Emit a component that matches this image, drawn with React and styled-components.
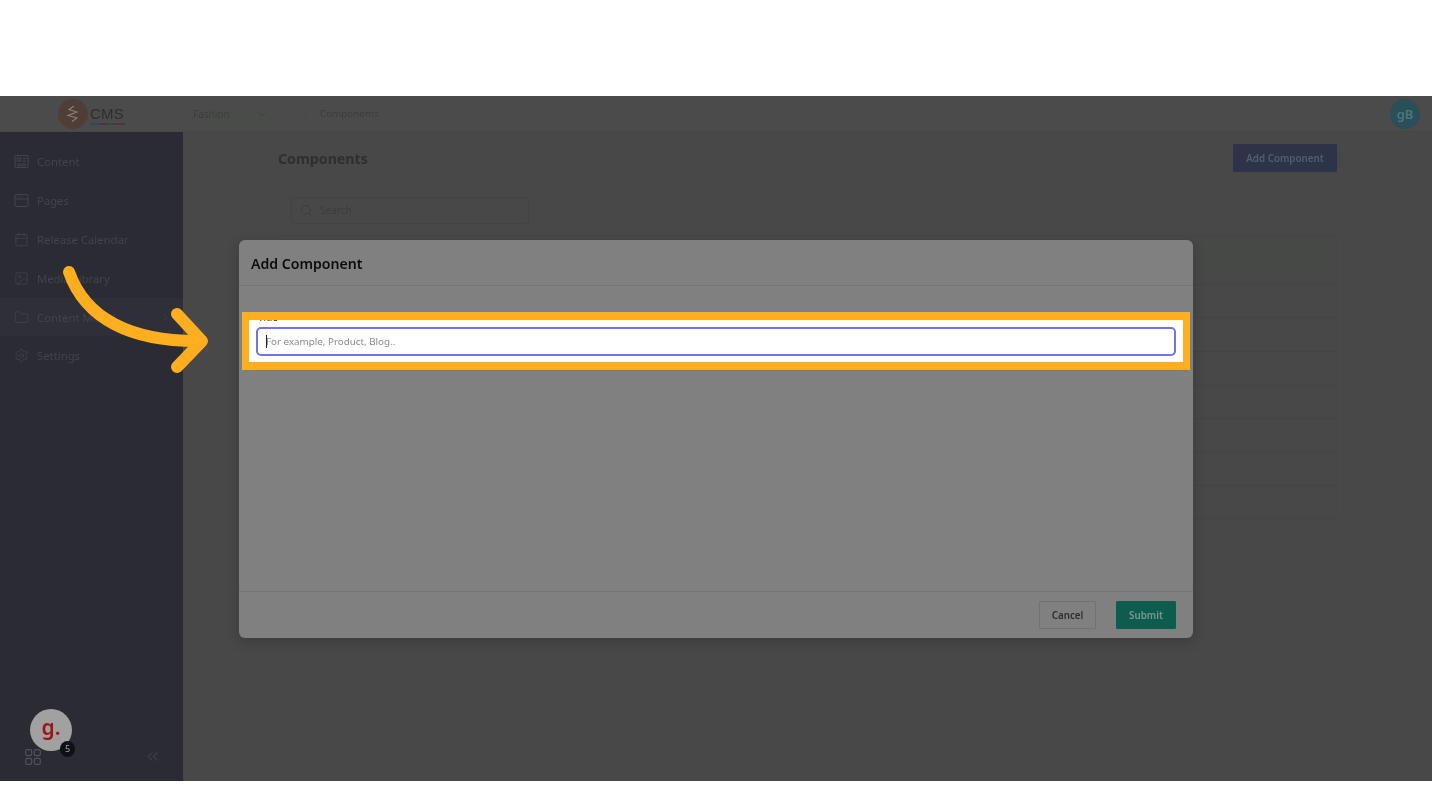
import React from 'react';
import styled, { createGlobalStyle } from 'styled-components';
import { Calendar, ChevronDown, ChevronRight, ChevronsLeft, Folder, Image, Search, Settings } from 'lucide-react';

const GlobalStyle = createGlobalStyle`
  html, body {
    margin: 0;
    background: #fff;
    font-family: "Noto Sans", "Open Sans", sans-serif;
  }
`;

const Page = styled.div`
  width: 1432px;
  height: 805px;
  padding-top: 96px;
  box-sizing: border-box;
  overflow: hidden;
  background: #fff;
`;

const Frame = styled.div`
  position: relative;
  height: 685px;
  display: grid;
  grid-template-columns: 183px 1fr;
  grid-template-rows: 36px 1fr;
  background: #484848;
  filter: blur(0.4px);
`;

const TopBar = styled.header`
  grid-column: 1 / 3;
  display: flex;
  align-items: center;
  padding-right: 12px;
  background: #4b4b4b;
  border-bottom: 1px solid #474747;
  box-sizing: border-box;
`;

const LogoBox = styled.div`
  width: 183px;
  display: flex;
  align-items: center;
  padding-left: 58px;
  box-sizing: border-box;
`;

const LogoMark = styled.div`
  width: 30px;
  height: 30px;
  border-radius: 50%;
  background: #4f3e38;
  display: flex;
  align-items: center;
  justify-content: center;
`;

const LogoWord = styled.div`
  margin-left: 2px;
  display: flex;
  flex-direction: column;
  font-family: "Liberation Sans", Arial, sans-serif;
  font-size: 15px;
  line-height: 15px;
  color: #2e2e2e;
  letter-spacing: 0.2px;
  padding-top: 3px;
`;

const LogoStripe = styled.div`
  height: 2px;
  width: 35px;
  margin-top: 2px;
  background: linear-gradient(90deg, #2d4a5a 0 30%, #4a3349 30% 50%, #34493f 50% 70%, #553530 70%);
`;

const SiteSelect = styled.div`
  width: 92px;
  height: 26px;
  padding: 0 6px 0 10px;
  box-sizing: border-box;
  display: flex;
  align-items: center;
  justify-content: space-between;
  border-radius: 3px;
  background: #4a4c4a;
  color: #3d3d3d;
  font-size: 10px;
`;

const Crumb = styled.div`
  margin-left: 26px;
  display: flex;
  align-items: center;
  gap: 9px;
  color: #3d3d3d;
  font-size: 9.8px;
`;

const UserBadge = styled.div`
  margin-left: auto;
  width: 30px;
  height: 30px;
  border-radius: 50%;
  background: #2a4f58;
  color: #4c7680;
  font-size: 13px;
  font-weight: 600;
  display: flex;
  align-items: center;
  justify-content: center;
`;

const Sidebar = styled.aside`
  display: flex;
  flex-direction: column;
  padding-top: 10.500px;
  background: #2a2b33;
`;

const NavItem = styled.div`
  height: 38.800px;
  padding: 0 11px 0 14px;
  display: flex;
  align-items: center;
  gap: 8px;
  background: ${props => (props.$active ? '#2e2f38' : 'transparent')};
  color: #42434c;
  font-size: 11.3px;
`;

const NavLabel = styled.span`
  flex: 1;
`;

const SidebarFoot = styled.div`
  margin-top: auto;
  height: 71px;
  padding: 0 22px 16px 25px;
  display: flex;
  align-items: flex-end;
  justify-content: space-between;
  color: #50515a;
`;

const HelpBubble = styled.div`
  position: absolute;
  left: 30px;
  bottom: 30px;
  width: 42px;
  height: 42px;
  border-radius: 50%;
  background: #a1a1a1;
  color: #9b1616;
  font-size: 21px;
  line-height: 36px;
  font-weight: 600;
  text-align: center;
`;

const HelpCount = styled.span`
  position: absolute;
  right: -3px;
  bottom: -6px;
  width: 15px;
  height: 16px;
  border-radius: 50%;
  background: #0d1117;
  color: #a5a5a5;
  font-size: 9px;
  line-height: 16px;
  font-weight: 400;
`;

const Main = styled.main`
  padding: 12px 95px 0;
  display: flex;
  flex-direction: column;
`;

const TitleRow = styled.div`
  display: flex;
  align-items: center;
  justify-content: space-between;
`;

const Title = styled.h1`
  margin: 0;
  color: #2f2f2f;
  font-size: 14.2px;
  font-weight: 700;
`;

const AddButton = styled.div`
  width: 104px;
  height: 28px;
  display: flex;
  align-items: center;
  justify-content: center;
  border-radius: 1px;
  background: #2d3349;
  color: #535d76;
  font-size: 9.8px;
  font-weight: 600;
`;

const SearchCard = styled.div`
  margin-top: 14px;
  height: 50px;
  padding: 10px 12px 0;
  box-sizing: border-box;
  border: 1px solid #474747;
  border-bottom-color: #454545;
`;

const SearchBox = styled.div`
  width: 238px;
  height: 27px;
  padding: 0 8px 1px;
  box-sizing: border-box;
  display: flex;
  align-items: center;
  gap: 7px;
  border: 1px solid #434343;
  border-radius: 3px;
  color: #3c3c3c;
  font-size: 10px;
`;

const Row = styled.div`
  height: ${props => props.$height}px;
  box-sizing: border-box;
  border-bottom: 1px solid #444;
  border-right: 1px solid #464646;
  background: ${props => (props.$tinted ? '#474947' : 'transparent')};
`;

const Backdrop = styled.div`
  position: absolute;
  inset: 0;
  display: flex;
  justify-content: center;
  align-items: flex-start;
  padding-top: 144px;
`;

const Modal = styled.div`
  width: 954px;
  height: 398px;
  display: flex;
  flex-direction: column;
  border-radius: 6px;
  background: #808080;
  box-shadow: 0 4px 14px rgba(0, 0, 0, 0.18);
`;

const ModalHead = styled.div`
  height: 46px;
  padding: 2px 12px 0;
  box-sizing: border-box;
  display: flex;
  align-items: center;
  border-bottom: 1px solid #757575;
  color: #0c0c0c;
  font-size: 14.1px;
  font-weight: 600;
`;

const ModalBody = styled.div`
  flex: 1;
  padding: 26px 3px 0;
`;

const Spotlight = styled.div`
  height: 58px;
  padding: 0 7px;
  box-sizing: border-box;
  border: solid #ffae1f;
  border-width: 8px 7px;
  background: #fff;
  overflow: hidden;
`;

const FieldLabel = styled.label`
  display: block;
  height: 12px;
  margin: -5px 0 0 2px;
  color: #333;
  font-size: 10px;
  line-height: 4px;
`;

const InputWrap = styled.div`
  position: relative;

  &::before {
    content: '';
    position: absolute;
    left: 10px;
    top: 8px;
    width: 1px;
    height: 13px;
    background: #222;
  }
`;

const TextInput = styled.input`
  display: block;
  width: 100%;
  height: 29px;
  padding: 0 8px;
  box-sizing: border-box;
  border: 2px solid #7272ea;
  border-radius: 5px;
  outline: none;
  background: #fff;
  font-family: inherit;
  font-size: 9.8px;

  &::placeholder {
    color: #8b8b8b;
    opacity: 1;
  }
`;

const ModalFoot = styled.div`
  height: 47px;
  padding: 9px 17px 0 0;
  box-sizing: border-box;
  display: flex;
  justify-content: flex-end;
  gap: 20px;
  border-top: 1px solid #757575;
`;

const FootButton = styled.div`
  width: ${props => (props.$primary ? 60 : 57)}px;
  height: 28px;
  box-sizing: border-box;
  display: flex;
  align-items: center;
  justify-content: center;
  border: 1px solid ${props => (props.$primary ? '#0c5f4f' : '#727272')};
  border-radius: 1px;
  background: ${props => (props.$primary ? '#0d5c4d' : 'transparent')};
  color: ${props => (props.$primary ? '#7a9891' : '#2e2e2e')};
  font-size: 9.8px;
  font-weight: 600;
`;

const Arrow = styled.svg`
  position: absolute;
  left: 0;
  top: 0;
  pointer-events: none;
`;

const ContentIcon = () => (
  <svg width="15" height="15" viewBox="0 0 15 15" fill="none" stroke="currentColor" strokeWidth="1.1">
    <rect x="1" y="1.5" width="13" height="12" rx="1.5" />
    <rect x="3.2" y="4" width="3.2" height="3" />
    <path d="M8.5 4.500h3.500M8.500 7h3.500M3 10h9M3 11.800h9" />
  </svg>
);

const PagesIcon = () => (
  <svg width="15" height="15" viewBox="0 0 15 15" fill="none" stroke="currentColor" strokeWidth="1.1">
    <rect x="1" y="1.5" width="13" height="12" rx="1.5" />
    <path d="M1 6h13M3 3.800h.8M5 3.800h.8M7 3.800h.8" />
  </svg>
);

const GridIcon = () => (
  <svg width="16" height="16" viewBox="0 0 16 16" fill="none" stroke="currentColor" strokeWidth="1.2">
    <rect x="0.7" y="0.7" width="6" height="6" rx="1.6" />
    <rect x="9.3" y="0.7" width="6" height="6" rx="1.6" />
    <rect x="0.7" y="9.3" width="6" height="6" rx="1.6" />
    <rect x="9.3" y="9.3" width="6" height="6" rx="1.6" />
  </svg>
);

const navItems = [
  { label: 'Content', icon: <ContentIcon /> },
  { label: 'Pages', icon: <PagesIcon /> },
  { label: 'Release Calendar', icon: <Calendar size={15} strokeWidth={1.3} /> },
  { label: 'Media Library', icon: <Image size={15} strokeWidth={1.3} /> },
  { label: 'Content Model', icon: <Folder size={15} strokeWidth={1.3} />, active: true },
  { label: 'Settings', icon: <Settings size={15} strokeWidth={1.3} /> },
];

const rowHeights = [49, 33, 34, 34, 33, 34, 33, 33];

export default function App() {
  return (
    <Page>
      <GlobalStyle />
      <Frame>
        <TopBar>
          <LogoBox>
            <LogoMark>
              <svg width="14" height="18" viewBox="0 0 14 18" fill="none" stroke="#8d7f78" strokeWidth="1.1">
                <path d="M8 1 3 4.500l8 2.500-9 3.500 9 2.500-5 3.500" />
              </svg>
            </LogoMark>
            <LogoWord>
              CMS
              <LogoStripe />
            </LogoWord>
          </LogoBox>
          <SiteSelect>
            Fashion
            <ChevronDown size={14} strokeWidth={1.4} color="#39443d" />
          </SiteSelect>
          <Crumb>
            <ChevronRight size={10} strokeWidth={1.2} color="#414141" />
            Components
          </Crumb>
          <UserBadge>gB</UserBadge>
        </TopBar>
        <Sidebar>
          {navItems.map(item => (
            <NavItem key={item.label} $active={item.active}>
              {item.icon}
              <NavLabel>{item.label}</NavLabel>
              {item.active && <ChevronRight size={13} strokeWidth={1.2} />}
            </NavItem>
          ))}
          <SidebarFoot>
            <GridIcon />
            <ChevronsLeft size={17} strokeWidth={1.2} />
          </SidebarFoot>
        </Sidebar>
        <Main>
          <TitleRow>
            <Title>Components</Title>
            <AddButton>Add Component</AddButton>
          </TitleRow>
          <SearchCard>
            <SearchBox>
              <Search size={13} strokeWidth={1.4} />
              Search
            </SearchBox>
          </SearchCard>
          {rowHeights.map((height, index) => (
            <Row key={index} $height={height} $tinted={index === 0} />
          ))}
        </Main>
        <HelpBubble>
          g.
          <HelpCount>5</HelpCount>
        </HelpBubble>
        <Backdrop>
          <Modal>
            <ModalHead>Add Component</ModalHead>
            <ModalBody>
              <Spotlight>
                <FieldLabel>Title</FieldLabel>
                <InputWrap>
                  <TextInput placeholder="For example, Product, Blog.." readOnly />
                </InputWrap>
              </Spotlight>
            </ModalBody>
            <ModalFoot>
              <FootButton>Cancel</FootButton>
              <FootButton $primary>Submit</FootButton>
            </ModalFoot>
          </Modal>
        </Backdrop>
        <Arrow width="230" height="300" viewBox="0 0 230 300" fill="none" stroke="#ffae1f" strokeWidth="12" strokeLinecap="round" strokeLinejoin="round">
          <path d="M69 176C85 222 130 246 201 245" />
          <path d="M177 218 202 245 177 271" />
        </Arrow>
      </Frame>
    </Page>
  );
}
